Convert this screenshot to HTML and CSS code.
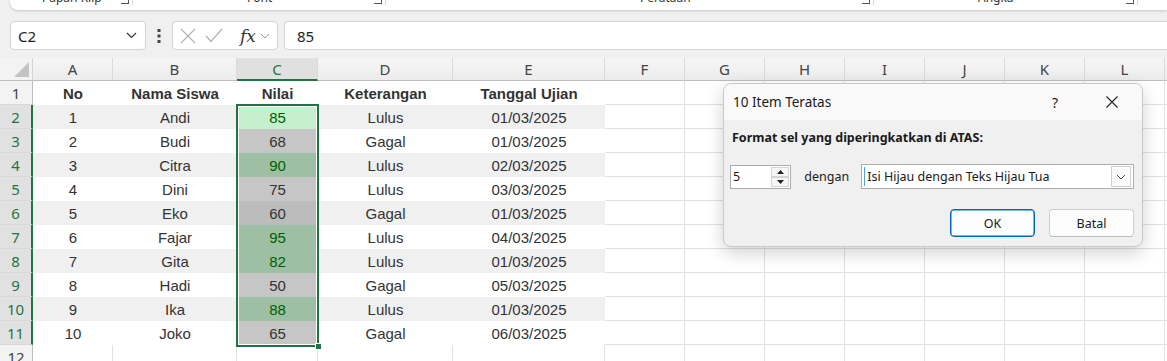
FILE: index.html
```html
<!DOCTYPE html>
<html lang="id">
<head>
    <meta charset="UTF-8">
    <title>Nilai Siswa - Excel</title>
    <link rel="stylesheet" href="styles.css">
</head>
<body>

<div class="ribbon">
    <div class="group g1"><span class="label">Papan Klip</span><span class="launcher"></span></div>
    <div class="group g2"><span class="label">Font</span><span class="launcher"></span></div>
    <div class="group g3"><span class="label">Perataan</span><span class="launcher"></span></div>
    <div class="group g4"><span class="label">Angka</span><span class="launcher"></span></div>
</div>

<div class="formula-bar">
    <div class="name-box">
        <span>C2</span>
        <svg width="11" height="7" viewBox="0 0 11 7"><polyline points="1,1 5.5,5.5 10,1" fill="none" stroke="#333" stroke-width="1.2"/></svg>
    </div>
    <div class="dots">
        <svg width="4" height="16" viewBox="0 0 4 16"><rect x="0.5" y="1" width="3" height="3" fill="#444"/><rect x="0.5" y="6.5" width="3" height="3" fill="#444"/><rect x="0.5" y="12" width="3" height="3" fill="#444"/></svg>
    </div>
    <div class="fx-box">
        <svg width="16" height="16" viewBox="0 0 16 16"><path d="M1 1 L15 15 M15 1 L1 15" stroke="#b3b3b3" stroke-width="1.3"/></svg>
        <svg width="18" height="15" viewBox="0 0 18 15"><polyline points="1,8 6,13.5 17,1" fill="none" stroke="#b3b3b3" stroke-width="1.3"/></svg>
        <span class="fx">fx</span>
        <svg width="10" height="6" viewBox="0 0 10 6"><polyline points="1,1 5,5 9,1" fill="none" stroke="#999" stroke-width="1"/></svg>
    </div>
    <div class="formula-input">85</div>
</div>

<div class="sheet">
    <div class="col-heads">
        <div class="corner"><svg width="15" height="15" viewBox="0 0 15 15"><polygon points="15,0 15,15 0,15" fill="#c4c4c4"/></svg></div>
        <div class="ch a">A</div>
        <div class="ch b">B</div>
        <div class="ch cc sel">C</div>
        <div class="ch d">D</div>
        <div class="ch e">E</div>
        <div class="ch f">F</div>
        <div class="ch f">G</div>
        <div class="ch f">H</div>
        <div class="ch f">I</div>
        <div class="ch f">J</div>
        <div class="ch f">K</div>
        <div class="ch f">L</div>
        <div class="ch f">M</div>
    </div>

    <div class="row">
        <div class="rh">1</div>
        <div class="c a bold">No</div><div class="c b bold">Nama Siswa</div><div class="c cc bold">Nilai</div><div class="c d bold">Keterangan</div><div class="c e bold">Tanggal Ujian</div>
        <div class="rest"></div>
    </div>
    <div class="row stripe">
        <div class="rh sel">2</div>
        <div class="c a">1</div><div class="c b">Andi</div><div class="c cc top active">85</div><div class="c d">Lulus</div><div class="c e">01/03/2025</div>
        <div class="rest"></div>
    </div>
    <div class="row">
        <div class="rh sel">3</div>
        <div class="c a">2</div><div class="c b">Budi</div><div class="c cc low">68</div><div class="c d">Gagal</div><div class="c e">01/03/2025</div>
        <div class="rest"></div>
    </div>
    <div class="row stripe">
        <div class="rh sel">4</div>
        <div class="c a">3</div><div class="c b">Citra</div><div class="c cc top">90</div><div class="c d">Lulus</div><div class="c e">02/03/2025</div>
        <div class="rest"></div>
    </div>
    <div class="row">
        <div class="rh sel">5</div>
        <div class="c a">4</div><div class="c b">Dini</div><div class="c cc low">75</div><div class="c d">Lulus</div><div class="c e">03/03/2025</div>
        <div class="rest"></div>
    </div>
    <div class="row stripe">
        <div class="rh sel">6</div>
        <div class="c a">5</div><div class="c b">Eko</div><div class="c cc low">60</div><div class="c d">Gagal</div><div class="c e">01/03/2025</div>
        <div class="rest"></div>
    </div>
    <div class="row">
        <div class="rh sel">7</div>
        <div class="c a">6</div><div class="c b">Fajar</div><div class="c cc top">95</div><div class="c d">Lulus</div><div class="c e">04/03/2025</div>
        <div class="rest"></div>
    </div>
    <div class="row stripe">
        <div class="rh sel">8</div>
        <div class="c a">7</div><div class="c b">Gita</div><div class="c cc top">82</div><div class="c d">Lulus</div><div class="c e">01/03/2025</div>
        <div class="rest"></div>
    </div>
    <div class="row">
        <div class="rh sel">9</div>
        <div class="c a">8</div><div class="c b">Hadi</div><div class="c cc low">50</div><div class="c d">Gagal</div><div class="c e">05/03/2025</div>
        <div class="rest"></div>
    </div>
    <div class="row stripe">
        <div class="rh sel">10</div>
        <div class="c a">9</div><div class="c b">Ika</div><div class="c cc top">88</div><div class="c d">Lulus</div><div class="c e">01/03/2025</div>
        <div class="rest"></div>
    </div>
    <div class="row">
        <div class="rh sel">11</div>
        <div class="c a">10</div><div class="c b">Joko</div><div class="c cc low">65</div><div class="c d">Gagal</div><div class="c e">06/03/2025</div>
        <div class="rest"></div>
    </div>
    <div class="row empty">
        <div class="rh">12</div>
        <div class="c a"></div><div class="c b"></div><div class="c cc"></div><div class="c d"></div><div class="c e"></div>
        <div class="rest"></div>
    </div>

    <div class="selection"><span class="handle"></span></div>
</div>

<div class="dialog">
    <div class="dialog-title">
        <span class="title-text">10 Item Teratas</span>
        <span class="title-btn help">?</span>
        <span class="title-btn close">
            <svg width="12" height="12" viewBox="0 0 12 12"><path d="M0.5 0.5 L11.5 11.5 M11.5 0.5 L0.5 11.5" stroke="#222" stroke-width="1.1"/></svg>
        </span>
    </div>
    <div class="dialog-body">
        <div class="prompt">Format sel yang diperingkatkan di ATAS:</div>
        <div class="option-row">
            <div class="spinner">
                <span class="spin-value">5</span>
                <div class="spin-buttons">
                    <span class="spin-btn"><svg width="7" height="4" viewBox="0 0 7 4"><polygon points="0,4 3.5,0 7,4" fill="#222"/></svg></span>
                    <span class="spin-btn"><svg width="7" height="4" viewBox="0 0 7 4"><polygon points="0,0 7,0 3.5,4" fill="#222"/></svg></span>
                </div>
            </div>
            <span class="with">dengan</span>
            <div class="combo">
                <span class="caret"></span>
                <span class="combo-text">Isi Hijau dengan Teks Hijau Tua</span>
                <span class="combo-btn"><svg width="10" height="6" viewBox="0 0 10 6"><polyline points="1,1 5,5 9,1" fill="none" stroke="#555" stroke-width="1"/></svg></span>
            </div>
        </div>
        <div class="buttons">
            <button class="btn primary">OK</button>
            <button class="btn">Batal</button>
        </div>
    </div>
</div>

</body>
</html>
```

FILE: styles.css
```css
* {
    box-sizing: border-box;
}
body {
    margin: 0;
    width: 1167px;
    height: 361px;
    overflow: hidden;
    position: relative;
    background-color: #f0f0f0;
    font-family: "Noto Sans", Arial, sans-serif;
    color: #333;
}

/* ribbon (only the bottom edge is visible) */
.ribbon {
    display: flex;
    height: 10px;
    margin-left: 10px;
    background-color: #fff;
    border-radius: 0 0 0 8px;
    box-shadow: 0 1px 3px rgba(0, 0, 0, 0.18);
    overflow: hidden;
}
.group {
    display: flex;
    align-items: flex-start;
    border-right: 1px solid #d6d6d6;
    height: 5px;
}
.g1 { width: 123px; padding-left: 32px; }
.g2 { width: 253px; padding-left: 114px; }
.g3 { width: 488px; padding-left: 254px; }
.g4 { width: 264px; padding-left: 104px; }
.label {
    font-size: 12px;
    line-height: 12px;
    margin-top: -8px;
    color: #333;
    white-space: nowrap;
}
.launcher {
    margin-left: auto;
    margin-right: 3px;
    width: 8px;
    height: 4px;
    border-right: 1px solid #555;
    border-bottom: 1px solid #555;
}

/* formula bar */
.formula-bar {
    display: flex;
    height: 29px;
    margin-top: 11px;
}
.name-box {
    margin-left: 10px;
    width: 136px;
    display: flex;
    align-items: center;
    justify-content: space-between;
    padding: 0 8px 0 7px;
    background-color: #fff;
    border: 1px solid #d4d4d4;
    border-radius: 4px;
    font-size: 15px;
    color: #222;
}
.dots {
    width: 26px;
    display: flex;
    align-items: center;
    justify-content: center;
}
.fx-box {
    width: 106px;
    display: flex;
    align-items: center;
    gap: 9px;
    padding-left: 7px;
    background-color: #fff;
    border: 1px solid #d4d4d4;
    border-radius: 4px;
}
.fx {
    font-family: "DejaVu Serif", "Liberation Serif", serif;
    font-style: italic;
    font-size: 17px;
    color: #333;
    margin-left: 8px;
    margin-right: -5px;
}
.formula-input {
    flex: 1;
    margin-left: 6px;
    display: flex;
    align-items: center;
    padding-left: 12px;
    background-color: #fff;
    border: 1px solid #d4d4d4;
    border-right: none;
    border-radius: 4px 0 0 4px;
    font-size: 15px;
    color: #222;
}

/* sheet */
.sheet {
    position: relative;
    margin-top: 8px;
}
.col-heads {
    display: flex;
    height: 23px;
}
.corner {
    width: 33px;
    flex: none;
    display: flex;
    align-items: flex-end;
    justify-content: flex-end;
    padding: 0 3px 3px 0;
    background-color: #f3f3f3;
    border-right: 1px solid #d4d4d4;
    border-bottom: 1px solid #bdbdbd;
}
.ch {
    flex: none;
    display: flex;
    align-items: center;
    justify-content: center;
    font-size: 15px;
    color: #444;
    background: linear-gradient(#f6f6f6, #ececec);
    border-right: 1px solid #dadada;
    border-bottom: 1px solid #bdbdbd;
}
.ch.sel {
    background: #e0e0e0;
    color: #217346;
    border-bottom: 2px solid #217346;
}
.row {
    display: flex;
    height: 24px;
}
.rh {
    width: 33px;
    flex: none;
    display: flex;
    align-items: center;
    justify-content: center;
    font-size: 15px;
    color: #444;
    background-color: #f3f3f3;
    border-right: 1px solid #bdbdbd;
    border-bottom: 1px solid #d9d9d9;
}
.rh.sel {
    background-color: #e1e1e1;
    color: #217346;
    border-right: 2px solid #217346;
}
.a { width: 80px; }
.b { width: 124px; }
.cc { width: 81px; }
.d { width: 135px; }
.e { width: 152px; }
.f { width: 80px; }
.c {
    flex: none;
    display: flex;
    align-items: center;
    justify-content: center;
    font-family: "Liberation Sans", Arial, sans-serif;
    font-size: 15px;
    color: #333;
    background-color: #fff;
}
.c.bold {
    font-weight: bold;
}
.row.stripe .c {
    background-color: #f0f0f0;
}
.row .c.top {
    background-color: #9ebfa3;
    color: #006100;
}
.row .c.top.active {
    background-color: #c6efce;
}
.row .c.low {
    background-color: #c6c6c6;
}
.row.stripe .c.low {
    background-color: #bcbcbc;
}
.row.empty .c {
    border-right: 1px solid #e1e1e1;
    border-bottom: 1px solid #e1e1e1;
}
.rest {
    flex: 1;
    background-color: #fff;
    background-image: repeating-linear-gradient(to right, transparent 0 79px, #e1e1e1 79px 80px);
    border-bottom: 1px solid #e1e1e1;
}
.selection {
    position: absolute;
    left: 236px;
    top: 46px;
    width: 83px;
    height: 243px;
    border: 2px solid #217346;
    box-shadow: inset 0 0 0 1px #fff;
    pointer-events: none;
}
.handle {
    position: absolute;
    right: -5px;
    bottom: -5px;
    width: 7px;
    height: 7px;
    background-color: #217346;
    border: 1px solid #fff;
}

/* dialog */
.dialog {
    position: absolute;
    left: 723px;
    top: 83px;
    width: 420px;
    height: 164px;
    background-color: #f0f0f0;
    border: 1px solid #c9c9c9;
    border-radius: 8px;
    box-shadow: 0 6px 18px rgba(0, 0, 0, 0.18);
    overflow: hidden;
    color: #1a1a1a;
}
.dialog-title {
    display: flex;
    align-items: center;
    height: 36px;
    padding-left: 9px;
    background-color: #f9f9f9;
}
.title-text {
    flex: 1;
    font-size: 13.5px;
}
.title-btn {
    width: 46px;
    display: flex;
    justify-content: center;
    align-items: center;
}
.help {
    font-size: 14px;
    margin-right: 11px;
}
.close {
    margin-right: 7px;
}
.dialog-body {
    padding: 10px 8px 0 8px;
}
.prompt {
    font-size: 12.5px;
    font-weight: bold;
    line-height: 16px;
}
.option-row {
    display: flex;
    align-items: center;
    margin-top: 18px;
    height: 25px;
}
.spinner {
    width: 62px;
    height: 24px;
    margin-left: -2px;
    display: flex;
    background-color: #fff;
    border: 1px solid #adadad;
}
.spin-value {
    flex: 1;
    font-size: 12.5px;
    padding-left: 2px;
    line-height: 22px;
}
.spin-buttons {
    width: 20px;
    display: flex;
    flex-direction: column;
    padding: 1px;
}
.spin-btn {
    flex: 1;
    display: flex;
    align-items: center;
    justify-content: center;
    background-color: #f6f6f6;
    border: 1px solid #d4d4d4;
}
.with {
    font-size: 12.5px;
    margin-left: 13px;
    margin-right: 12px;
}
.combo {
    width: 276px;
    height: 25px;
    display: flex;
    align-items: center;
    padding: 2px;
    background-color: #fff;
    border: 1px solid #adadad;
}
.caret {
    width: 1px;
    height: 19px;
    background-color: #5aa0e6;
    margin-right: 2px;
}
.combo-text {
    flex: 1;
    font-size: 12.5px;
}
.combo-btn {
    width: 20px;
    height: 21px;
    display: flex;
    align-items: center;
    justify-content: center;
    border: 1px solid #d0d0d0;
    background-color: #fbfbfb;
}
.buttons {
    display: flex;
    justify-content: flex-end;
    gap: 14px;
    margin-top: 20px;
}
.btn {
    width: 85px;
    height: 28px;
    font-family: "Noto Sans", Arial, sans-serif;
    font-size: 12.5px;
    color: #1a1a1a;
    background-color: #fdfdfd;
    border: 1px solid #d0d0d0;
    border-bottom-color: #bcbcbc;
    border-radius: 4px;
}
.btn.primary {
    border: 1px solid #0067c0;
    box-shadow: inset 0 0 0 0.5px #0067c0;
}
```
